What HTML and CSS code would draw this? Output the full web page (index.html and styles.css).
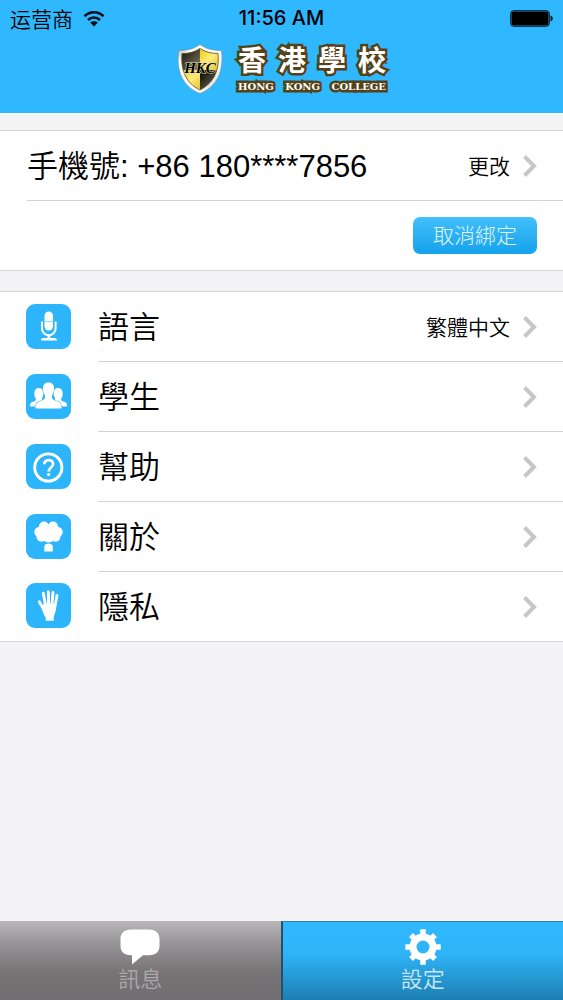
FILE: index.html
```html
<!DOCTYPE html>
<html lang="zh-Hant">
<head>
    <meta charset="UTF-8">
    <meta name="viewport" content="width=device-width, initial-scale=1.0">
    <title>設定</title>
    <link rel="stylesheet" href="styles.css">
</head>
<body>

    <!-- Header -->
    <header class="top-bar">
        <div class="status-bar">
            <div class="carrier">
                <span lang="zh-Hans">运营商</span>
                <svg class="wifi" viewBox="0 0 22 17" width="22" height="17">
                    <path d="M1.5 6.2a13.4 13.4 0 0 1 19 0M5 10a8.5 8.5 0 0 1 12 0" fill="none" stroke="#04141f" stroke-width="2.7"/>
                    <path d="M11 16.5l-3.9-3.9a5.5 5.5 0 0 1 7.8 0z" fill="#04141f"/>
                </svg>
            </div>
            <div class="time">11:56 AM</div>
            <div class="battery">
                <svg viewBox="0 0 43 17" width="43" height="17">
                    <rect x=".7" y=".7" width="38.6" height="15.6" rx="3" fill="none" stroke="#04141f" stroke-width="1"/>
                    <rect x="1.5" y="1.5" width="37" height="14" rx="2" fill="#000"/>
                    <path d="M40.5 5.5c3 .8 3 5.2 0 6z" fill="#04141f"/>
                </svg>
            </div>
        </div>
        <div class="brand">
            <svg class="shield" viewBox="0 0 46 50" width="46" height="50">
                <defs>
                    <linearGradient id="silver" x1="0" y1="0" x2="1" y2="1">
                        <stop offset="0" stop-color="#8e979d"/>
                        <stop offset=".2" stop-color="#fff"/>
                        <stop offset=".75" stop-color="#f2f4f5"/>
                        <stop offset="1" stop-color="#87939b"/>
                    </linearGradient>
                    <linearGradient id="gold" x1="0" y1="0" x2="1" y2="1">
                        <stop offset="0" stop-color="#e9c90c"/>
                        <stop offset=".5" stop-color="#ffec7a"/>
                        <stop offset="1" stop-color="#e2bd20"/>
                    </linearGradient>
                    <linearGradient id="black" x1="0" y1="0" x2="1" y2="1">
                        <stop offset="0" stop-color="#050505"/>
                        <stop offset="1" stop-color="#8a7f62"/>
                    </linearGradient>
                    <clipPath id="shape">
                        <path d="M23 4.5C18 8 11.5 9.5 5 9.5C3.5 25 8 38.5 23 46C38 38.5 42.5 25 41 9.5C34.5 9.5 28 8 23 4.5z"/>
                    </clipPath>
                </defs>
                <path d="M23 .5C17 5 10 6.500 1.500 6.500C-.5 25 4 42 23 49.500C42 42 46.500 25 44.500 6.500C36 6.500 29 5 23 .5z" fill="url(#silver)" stroke="#7b8b94" stroke-width=".6"/>
                <g clip-path="url(#shape)">
                    <rect x="3" y="3" width="20" height="23" fill="url(#black)"/>
                    <rect x="23" y="3" width="20" height="23" fill="url(#gold)"/>
                    <rect x="3" y="26" width="20" height="22" fill="url(#gold)"/>
                    <rect x="23" y="26" width="20" height="22" fill="url(#black)"/>
                </g>
                <path d="M23 4.5C18 8 11.5 9.5 5 9.5C3.5 25 8 38.5 23 46C38 38.5 42.5 25 41 9.5C34.5 9.5 28 8 23 4.5z" fill="none" stroke="#5f531c" stroke-width=".8"/>
                <text class="monogram" x="23" y="29" text-anchor="middle">HKC</text>
            </svg>
            <div class="school">
                <div class="school-name"><span>香</span><span>港</span><span>學</span><span>校</span></div>
                <div class="school-sub"><span>HONG</span> <span>KONG</span> <span>COLLEGE</span></div>
            </div>
        </div>
    </header>

    <!-- Settings -->
    <main class="content">
        <section class="group account">
            <a class="row" href="#phone">
                <span class="label">手機號: +86 180****7856</span>
                <span class="value">更改</span>
                <svg class="arrow" viewBox="0 0 14 22" width="14" height="22"><path d="M1.5 1.5L11 11L1.5 20.5"/></svg>
            </a>
            <div class="row">
                <button class="unbind" type="button">取消綁定</button>
            </div>
        </section>

        <nav class="group menu">
            <a class="item" href="#language">
                <svg class="icon" viewBox="0 0 45 45" width="45" height="45">
                    <rect x="18.5" y="7.500" width="8.500" height="19" rx="4.200" fill="#fff"/>
                    <path d="M18.5 17.5h8.500" stroke="#7dcffc" stroke-width=".8"/>
                    <path d="M16 17.500v7a6.800 6.800 0 0 0 13.600 0v-7" fill="none" stroke="#fff" stroke-width="2"/>
                    <path d="M21.500 31h2.800v3h4.500a2 2 0 0 1 2 2.500H15a2 2 0 0 1 2-2.500h4.500z" fill="#fff"/>
                </svg>
                <span class="row">
                    <span class="label">語言</span>
                    <span class="value">繁體中文</span>
                    <svg class="arrow" viewBox="0 0 14 22" width="14" height="22"><path d="M1.5 1.5L11 11L1.5 20.5"/></svg>
                </span>
            </a>
            <a class="item" href="#students">
                <svg class="icon" viewBox="0 0 45 45" width="45" height="45">
                    <path d="M13 14c3 0 4.500 2 4.500 5c0 3-1 4-1.500 5c0 2 0 3 2 3.500v5H4c0-3 .5-4 3-4.700c2.500-.8 3-1.300 2.800-3.300c-1-1.500-1.500-2.500-1.500-5.500c0-3 1.700-5 4.700-5z" fill="#fff"/>
                    <path d="M32 14c-3 0-4.500 2-4.500 5c0 3 1 4 1.500 5c0 2 0 3-2 3.500v5h14c0-3-.5-4-3-4.700c-2.500-.8-3-1.300-2.800-3.300c1-1.500 1.500-2.500 1.500-5.500c0-3-1.700-5-4.700-5z" fill="#fff"/>
                    <path d="M22.500 8.500c4 0 5.700 2.600 5.500 6.500c-.1 3.500-1 5-2 6.500c-.3 3 .5 4 3.500 5.200c4.500 1.500 6 2.800 6 7.800h-26c0-5 1.500-6.300 6-7.800c3-1.200 3.800-2.200 3.500-5.200c-1-1.500-1.900-3-2-6.500c-.2-3.900 1.500-6.500 5.500-6.500z" fill="#fff" stroke="#2cb5fb" stroke-width="1.200" paint-order="stroke"/>
                </svg>
                <span class="row">
                    <span class="label">學生</span>
                    <svg class="arrow" viewBox="0 0 14 22" width="14" height="22"><path d="M1.5 1.5L11 11L1.5 20.5"/></svg>
                </span>
            </a>
            <a class="item" href="#help">
                <svg class="icon" viewBox="0 0 45 45" width="45" height="45">
                    <circle cx="22.3" cy="23.5" r="13.600" fill="none" stroke="#fff" stroke-width="2.900"/>
                    <path d="M18.300 20.300c0-5.600 8.800-5.600 8.800-.3c0 3.600-4.400 3.500-4.400 7.500" fill="none" stroke="#fff" stroke-width="2.800"/>
                    <circle cx="22.600" cy="30.500" r="1.600" fill="#fff"/>
                </svg>
                <span class="row">
                    <span class="label">幫助</span>
                    <svg class="arrow" viewBox="0 0 14 22" width="14" height="22"><path d="M1.5 1.5L11 11L1.5 20.5"/></svg>
                </span>
            </a>
            <a class="item" href="#about">
                <svg class="icon" viewBox="0 0 45 45" width="45" height="45">
                    <g fill="#fff">
                        <circle cx="18" cy="12.5" r="5"/>
                        <circle cx="27" cy="12.5" r="5"/>
                        <circle cx="13.500" cy="18" r="5.200"/>
                        <circle cx="31.500" cy="18" r="5.200"/>
                        <circle cx="15.500" cy="22.800" r="5"/>
                        <circle cx="29.500" cy="22.800" r="5"/>
                        <circle cx="22.500" cy="21.500" r="7"/>
                        <path d="M18.300 37.500v-5.500c1.500-3.200 6.800-3.200 8.500 0v5.500z"/>
                    </g>
                </svg>
                <span class="row">
                    <span class="label">關於</span>
                    <svg class="arrow" viewBox="0 0 14 22" width="14" height="22"><path d="M1.5 1.5L11 11L1.5 20.5"/></svg>
                </span>
            </a>
            <a class="item" href="#privacy">
                <svg class="icon" viewBox="0 0 45 45" width="45" height="45">
                    <path d="M13.300 18.800L17.500 26M17.300 10.300L19.700 23M22.300 8.800L22.700 23M27 9.500L25.800 23M31 12.500L28.500 26" fill="none" stroke="#fff" stroke-width="2.900" stroke-linecap="round"/>
                    <path d="M15.500 23L18.300 20.500H29.500L29.900 26C29.500 30.500 28 32 27.700 34.500V37.700H19.800V35C18 31.500 16 28.500 15.500 23z" fill="#fff"/>
                </svg>
                <span class="row">
                    <span class="label">隱私</span>
                    <svg class="arrow" viewBox="0 0 14 22" width="14" height="22"><path d="M1.5 1.5L11 11L1.5 20.5"/></svg>
                </span>
            </a>
        </nav>
    </main>

    <!-- Bottom tabs -->
    <nav class="tabs">
        <a class="tab" href="#messages">
            <svg viewBox="0 0 40 36" width="40" height="36">
                <path d="M11 .5H29C36 .5 39.500 4.500 39.500 10V17C39.500 22.500 36 26.300 29 26.300H23L12 35.500V26.300H11C4 26.300 .5 22.500 .5 17V10C.5 4.500 4 .5 11 .5z" fill="#fff"/>
            </svg>
            <span>訊息</span>
        </a>
        <a class="tab active" href="#settings">
            <svg viewBox="-18 -18 36 36" width="36" height="36">
                <circle r="10" fill="none" stroke="#fff" stroke-width="7"/>
                <g stroke="#fff" stroke-width="5.500">
                    <path d="M0-12V-17.700M0 12V17.700M-12 0H-17.700M12 0H17.700"/>
                    <path d="M8.500-8.500L12-12M8.500 8.500L12 12M-8.500 8.500L-12 12M-8.500-8.500L-12-12"/>
                </g>
            </svg>
            <span>設定</span>
        </a>
    </nav>

</body>
</html>
```
FILE: styles.css
```css
* {
    box-sizing: border-box;
}

body {
    margin: 0;
    min-height: 100vh;
    display: flex;
    flex-direction: column;
    background-color: #f4f3f6;
    color: #000;
    font-family: "Liberation Sans", "Noto Sans CJK TC", sans-serif;
    font-weight: 350;
}

a {
    color: inherit;
    text-decoration: none;
}

svg {
    display: block;
    flex: none;
}

/* Header */
.top-bar {
    height: 113px;
    background-color: #30b8ff;
}

.status-bar {
    display: grid;
    grid-template-columns: 1fr auto 1fr;
    align-items: center;
    height: 36px;
    padding: 0 10px;
}

.carrier {
    display: flex;
    align-items: center;
    gap: 10px;
    font-family: "Noto Sans CJK SC", sans-serif;
    font-size: 21px;
    line-height: 32px;
}

.time {
    font-family: Inter, "Liberation Sans", sans-serif;
    font-size: 20px;
    font-weight: 500;
}

.battery {
    justify-self: end;
}

.brand {
    display: flex;
    align-items: center;
    justify-content: center;
    gap: 15px;
    padding-top: 3px;
}

.shield {
    margin-top: 4px;
}

.monogram {
    font-family: "Liberation Serif", serif;
    font-size: 15px;
    font-style: italic;
    font-weight: bold;
    fill: #000;
    stroke: #e9e2b8;
    stroke-width: 1px;
    paint-order: stroke;
}

.school {
    width: 148px;
    color: #fff;
    -webkit-text-stroke: 5px #544218;
    paint-order: stroke fill;
}

.school-name {
    display: flex;
    justify-content: space-between;
    font-family: "Noto Sans CJK TC", sans-serif;
    font-size: 28px;
    font-weight: 700;
    line-height: 40px;
}

.school-sub {
    display: flex;
    justify-content: space-between;
    font-family: "DejaVu Serif", serif;
    font-size: 10px;
    font-weight: bold;
    line-height: 16px;
}

/* Groups */
.content {
    flex: 1;
    display: flex;
    flex-direction: column;
    gap: 20px;
    padding-top: 17px;
}

.group {
    background-color: #fff;
    border-top: 1px solid #d3d2d5;
    border-bottom: 1px solid #d3d2d5;
}

.account {
    padding-left: 27px;
}

.row {
    flex: 1;
    display: flex;
    align-items: center;
    justify-content: flex-end;
    height: 70px;
    padding-right: 26px;
    border-bottom: 1px solid #d3d2d5;
}

.account .row:last-child,
.item:last-child .row {
    height: 69px;
    border-bottom: none;
}

.item {
    display: flex;
    align-items: center;
    gap: 27px;
    padding-left: 26px;
}

.icon {
    margin-bottom: 2px;
    border-radius: 9px;
    background-color: #2cb5fb;
}

.label {
    flex: 1;
    padding-bottom: 5px;
    font-size: 31px;
    white-space: nowrap;
}

.value {
    margin-right: 13px;
    padding-bottom: 2px;
    font-size: 21px;
}

.arrow {
    fill: none;
    stroke: #c7c7cb;
    stroke-width: 4px;
}

.unbind {
    height: 37px;
    padding: 0 20px;
    border: none;
    border-radius: 7px;
    background: linear-gradient(#43bffa, #14a2ec);
    color: #e2f5ff;
    font-family: inherit;
    font-size: 21px;
    font-weight: 300;
    line-height: 37px;
    cursor: pointer;
}

/* Bottom tabs */
.tabs {
    display: flex;
    height: 79px;
}

.tab {
    flex: 1;
    display: flex;
    flex-direction: column;
    align-items: center;
    padding-top: 8px;
    background: linear-gradient(#bab8bb, #949294 30%, #777476 65%, #716e71);
    color: #aaa8aa;
    font-size: 22px;
    line-height: 30px;
}

.tab.active {
    border-top: 1px solid #3a7ea3;
    border-left: 2px solid #24506a;
    padding-top: 7px;
    background: linear-gradient(#30b8ff, #2fb4f9 40%, #1c7fb1);
    color: #c9e6f5;
}
```
